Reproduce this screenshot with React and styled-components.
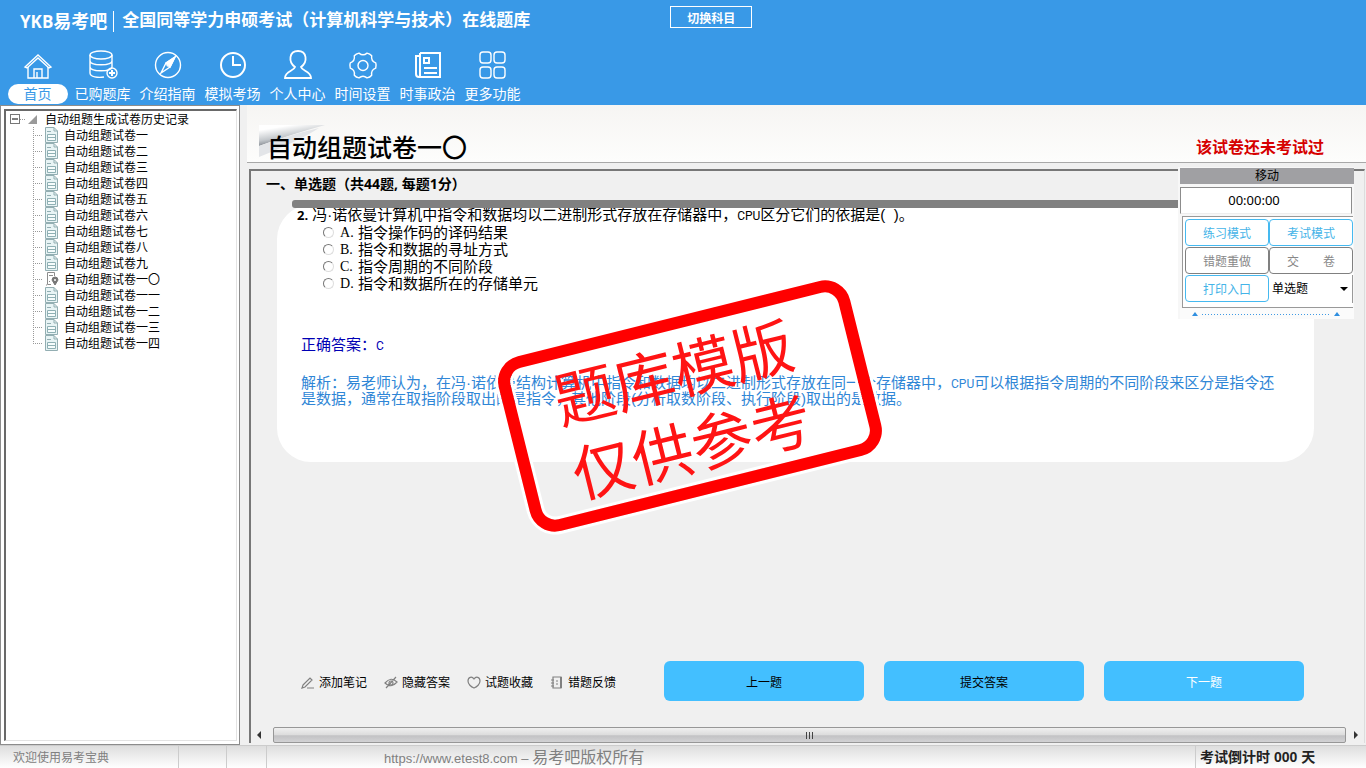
import React from 'react';
import styled, { createGlobalStyle } from 'styled-components';

const menus = [
  { name: '首页', icon: 'home' },
  { name: '已购题库', icon: 'bank' },
  { name: '介绍指南', icon: 'compass' },
  { name: '模拟考场', icon: 'clock' },
  { name: '个人中心', icon: 'user' },
  { name: '时间设置', icon: 'gear' },
  { name: '时事政治', icon: 'news' },
  { name: '更多功能', icon: 'more' },
];

const papers = ['一', '二', '三', '四', '五', '六', '七', '八', '九', '一〇', '一一', '一二', '一三', '一四'];

const options = [
  { key: 'A', text: '指令操作码的译码结果' },
  { key: 'B', text: '指令和数据的寻址方式' },
  { key: 'C', text: '指令周期的不同阶段' },
  { key: 'D', text: '指令和数据所在的存储单元' },
];

const tools = [
  { name: '添加笔记', icon: 'pen' },
  { name: '隐藏答案', icon: 'eye' },
  { name: '试题收藏', icon: 'heart' },
  { name: '错题反馈', icon: 'book' },
];

const menuIcons = {
  home: (
    <>
      <path d="M3 17 L16 5 L29 17 L27 18 L16 8 L5 18 Z" />
      <path d="M6 17 V28 H26 V17 M12 28 V19 H20 V28 M15 28 V22" />
    </>
  ),
  bank: (
    <>
      <ellipse cx="14" cy="5" rx="11" ry="4" />
      <path d="M3 5 V11 C3 16 25 16 25 11 V5 M3 11 V17 C3 22 25 22 25 17 V11 M3 17 V23 C3 27 11 28 17 27" />
      <circle cx="25" cy="23" r="5" />
      <path d="M25 20 V26 M22 23 H28" strokeWidth="2" />
    </>
  ),
  compass: (
    <>
      <circle cx="16" cy="15" r="12.500" />
      <path d="M23 7 L18 17 L9 23 L14 13 Z" />
      <path d="M23 7 L14 13 L18 17 Z" fill="#fff" />
      <circle cx="16" cy="15" r="1" fill="#3999e7" />
    </>
  ),
  clock: (
    <>
      <circle cx="16" cy="15" r="12" strokeWidth="2" />
      <path d="M16 6 V15 H24" strokeWidth="2" />
    </>
  ),
  user: (
    <path
      strokeWidth="1.800"
      d="M13 17 C6 12 7 1 16 1 C25 1 26 12 19 17 C20 21 29 21 29 28 H3 C3 21 12 21 13 17 Z"
    />
  ),
  gear: (
    <>
      <path
        strokeLinejoin="round"
        d="M28.700 12.800 Q29.600 15.500 28.700 18.200 Q23.800 20 24.700 25.200 Q23 27.300 20 27.900 Q16 24.500 12 27.900 Q9 27.300 7.300 25.200 Q8.200 20 3.300 18.200 Q2.400 15.500 3.300 12.800 Q8.200 11 7.300 5.800 Q9 3.700 12 3.100 Q16 6.500 20 3.100 Q23 3.700 24.700 5.800 Q23.800 11 28.700 12.800 Z"
      />
      <circle cx="16" cy="15.500" r="5" />
    </>
  ),
  news: (
    <>
      <path strokeWidth="2" d="M8 3 H28 V27 H7 Q4 27 4 24 V6 H8 M8 3 V27" />
      <path strokeWidth="2" d="M12 8 H17 V13 H12 Z M12 18 H25 M12 23 H25" />
    </>
  ),
  more: (
    <>
      <rect x="3" y="2" width="11" height="11" rx="3" />
      <rect x="17" y="2" width="11" height="11" rx="3" />
      <rect x="3" y="17" width="11" height="11" rx="3" />
      <rect x="17" y="17" width="11" height="11" rx="3" />
    </>
  ),
};

const toolIcons = {
  pen: <path d="M2 9 L9 2 L11 4 L4 11 L1 12 Z M6 12 H13" />,
  eye: (
    <>
      <path d="M1 7 Q7 0 13 6 Q7 13 1 7 Z M2 12 L12 1" />
      <circle cx="7" cy="7" r="2" />
    </>
  ),
  heart: <path d="M7 12 C4 11 1 8 1 5 C1 1 5 0 7 3 C9 0 13 1 13 5 C13 8 10 11 7 12 Z" />,
  book: (
    <>
      <path d="M3 1 H11 V12 H3 Z M1 4 H4 M1 7 H4 M1 10 H4 M6 5 H8 M6 8 H8" />
      <path d="M11 1 V12" strokeWidth="2" />
    </>
  ),
};

const PaperIcon = () => (
  <svg width="14" height="16" viewBox="0 0 14 16" fill="none" stroke="#93aeb2">
    <path d="M.5 .5 H9 L12.500 4 V15.500 H.5 Z" fill="#e8f4f5" />
    <path d="M9 .5 V4 H12.500 M2 4.500 H6" />
    <path d="M2.500 7.500 H10.500 V13.500 H2.500 Z M2 10.500 H11" stroke="#8fb0b4" fill="#f6fcfc" />
  </svg>
);

const CurrentIcon = () => (
  <svg width="14" height="16" viewBox="0 0 14 16" fill="none" stroke="#8c8c8c">
    <path d="M6 13.500 H2.500 V1.500 H9.500 V5 M2 14 H1 M4 4.500 H8 M4 10.500 H5" />
    <path d="M10 14 L7 9 Q7 6 10 6 Q13 6 13 9 Z" fill="#777" stroke="#777" />
    <circle cx="10" cy="9" r="1" fill="#fff" stroke="none" />
  </svg>
);

const App = () => {
  return (
    <Page>
      <GlobalStyle />
      <Header>
        <TitleRow>
          <Brand>YKB<span>易考吧</span></Brand>
          <Subject>全国同等学力申硕考试（计算机科学与技术）在线题库</Subject>
          <SwitchBox>
            <SwitchButton>切换科目</SwitchButton>
          </SwitchBox>
        </TitleRow>
        <Menu>
          {menus.map((m, i) => (
            <MenuItem href="#" key={m.name}>
              <svg width="32" height="30" viewBox="0 0 32 30" fill="none" stroke="#fff" strokeWidth="1.400">
                {menuIcons[m.icon]}
              </svg>
              <MenuLabel $active={i === 0}>{m.name}</MenuLabel>
            </MenuItem>
          ))}
        </Menu>
      </Header>

      <Body>
        <Side>
          <Tree>
            <TreeRoot>
              <svg width="36" height="16" viewBox="0 0 36 16">
                <rect x="4.500" y="3.500" width="9" height="9" fill="#fff" stroke="#777" />
                <path d="M6 8 H12" stroke="#000" />
                <path d="M14 8.500 H20" stroke="#999" strokeDasharray="1 1" />
                <path d="M22 13 L31 4 V13 Z" fill="#9a9a9a" />
              </svg>
              自动组题生成试卷历史记录
            </TreeRoot>
            <TreeList>
              {papers.map((p, i) => (
                <TreeItem key={p} $last={i === papers.length - 1}>
                  {p === '一〇' ? <CurrentIcon /> : <PaperIcon />}
                  <span>自动组题试卷{p}</span>
                </TreeItem>
              ))}
            </TreeList>
          </Tree>
        </Side>

        <Main>
          <PaperHead>
            <Curl width="68" height="36" viewBox="0 0 68 36">
              <defs>
                <linearGradient id="curl" x1="0" y1="0" x2="0.500" y2="1">
                  <stop offset="0.200" stopColor="#fff" />
                  <stop offset="0.600" stopColor="#c4c8cc" />
                  <stop offset="0.800" stopColor="#8d9299" />
                  <stop offset="1" stopColor="#f2f2f2" />
                </linearGradient>
              </defs>
              <path d="M0 0 H66 Q30 10 0 21 Z" fill="url(#curl)" />
              <path d="M0 21 Q30 10 60 3 Q40 16 0 32 Z" fill="#e3e5e8" />
            </Curl>
            <PaperName>自动组题试卷一〇</PaperName>
            <PaperState>该试卷还未考试过</PaperState>
          </PaperHead>

          <Panel>
            <Section>一、单选题（共44题, 每题1分）</Section>
            <QuestionBox>
              <Bar />
              <Question>
                <b>2.</b>
                <span>冯·诺依曼计算机中指令和数据均以二进制形式存放在存储器中，<Latin>CPU</Latin>区分它们的依据是(&nbsp; )。</span>
              </Question>
              {options.map((o) => (
                <Option key={o.key}>
                  <input type="radio" name="answer" />
                  <i>{o.key}.</i>
                  <span>{o.text}</span>
                </Option>
              ))}
              <Answer>正确答案：<Latin>C</Latin></Answer>
              <Explain>
                解析：易老师认为，在冯·诺依曼结构计算机中指令和数据均以二进制形式存放在同一个存储器中，<Latin>CPU</Latin>可以根据指令周期的不同阶段来区分是指令还是数据，通常在取指阶段取出的是指令，其他阶段(分析取数阶段、执行阶段)取出的是数据。
              </Explain>
              <Stamp>
                <div>题库模版</div>
                <div>仅供参考</div>
              </Stamp>
            </QuestionBox>

            <Actions>
              <Tools>
                {tools.map((t) => (
                  <Tool key={t.name}>
                    <svg width="14" height="14" viewBox="0 0 14 14" fill="none" stroke="#808080" strokeWidth="1.200">
                      {toolIcons[t.icon]}
                    </svg>
                    {t.name}
                  </Tool>
                ))}
              </Tools>
              <BigButton>上一题</BigButton>
              <BigButton>提交答案</BigButton>
              <BigButton $light>下一题</BigButton>
            </Actions>

            <Scroll>
              <svg width="22" height="16" viewBox="0 0 22 16"><path d="M10 4 V12 L6 8 Z" fill="#333" /></svg>
              <Thumb><i /><i /><i /></Thumb>
              <svg width="18" height="16" viewBox="0 0 18 16"><path d="M8 4 V12 L12 8 Z" fill="#333" /></svg>
            </Scroll>

            <Float>
              <FloatHead>移动</FloatHead>
              <Timer>00:00:00</Timer>
              <Modes>
                <ModeButton>练习模式</ModeButton>
                <ModeButton>考试模式</ModeButton>
                <ModeButton $gray>错题重做</ModeButton>
                <ModeButton $gray>交　　卷</ModeButton>
                <ModeButton>打印入口</ModeButton>
                <TypeBox>
                  <TypeSelect aria-label="题型">
                    <option>单选题</option>
                  </TypeSelect>
                  <svg width="8" height="4" viewBox="0 0 8 4"><path d="M0 0 H8 L4 4 Z" fill="#000" /></svg>
                </TypeBox>
              </Modes>
              <Fold>
                <svg width="6" height="4" viewBox="0 0 6 4"><path d="M0 4 L3 0 L6 4 Z" fill="#2f8fe0" /></svg>
                <hr />
                <svg width="6" height="4" viewBox="0 0 6 4"><path d="M0 4 L3 0 L6 4 Z" fill="#2f8fe0" /></svg>
              </Fold>
            </Float>
          </Panel>
        </Main>
      </Body>

      <Footer>
        <Welcome>欢迎使用易考宝典</Welcome>
        <Cell $w={48} />
        <Cell $w={40} />
        <Copyright>https://www.etest8.com – <span>易考吧版权所有</span></Copyright>
        <CountDown>考试倒计时 000 天</CountDown>
      </Footer>
    </Page>
  );
};

const GlobalStyle = createGlobalStyle`
  * {
    box-sizing: border-box;
  }
  body {
    margin: 0;
    font-family: "Liberation Sans", "Noto Sans CJK SC", sans-serif;
    font-size: 12px;
    color: #000;
  }
  button, select {
    font-family: inherit;
    font-size: 12px;
    padding: 0;
  }
  p, h1, h2 {
    margin: 0;
  }
  svg {
    flex: none;
    display: block;
  }
`

const Page = styled.div`
  display: flex;
  flex-direction: column;
  min-height: 100vh;
`

const Header = styled.header`
  height: 105px;
  background-color: #3999e7;
  color: white;
`

const TitleRow = styled.div`
  display: flex;
  align-items: center;
  height: 42px;
  padding-left: 20px;
`

const Brand = styled.div`
  font-family: "Open Sans", "Noto Sans CJK SC", sans-serif;
  font-size: 17px;
  font-weight: bold;
  line-height: 20px;
  padding-right: 6px;
  border-right: 1px solid white;
  margin-right: 8px;
  span {
    font-size: 18px;
  }
`

const Subject = styled.h1`
  font-size: 17px;
  font-weight: bold;
  line-height: 20px;
`

const SwitchBox = styled.div`
  flex: 1;
  align-self: flex-start;
  padding: 6px 0 0 140px;
`

const SwitchButton = styled.button`
  display: block;
  width: 82px;
  height: 22px;
  border: 1px solid white;
  background: none;
  color: white;
  font-weight: bold;
`

const Menu = styled.nav`
  display: flex;
  padding: 8px 0 0 5px;
`

const MenuItem = styled.a`
  display: flex;
  flex-direction: column;
  align-items: center;
  width: 65px;
  color: white;
  text-decoration: none;
`

const MenuLabel = styled.span`
  width: 60px;
  height: 20px;
  margin-top: 4px;
  border-radius: 10px;
  font-size: 14px;
  line-height: 20px;
  text-align: center;
  white-space: nowrap;
  background-color: ${(props) => (props.$active ? 'white' : 'transparent')};
  color: ${(props) => (props.$active ? '#3999e7' : 'white')};
`

const Body = styled.div`
  flex: 1;
  display: flex;
  background-color: #f0f0f0;
`

const Side = styled.aside`
  width: 240px;
  padding: 3px 2px 3px 3px;
  border: 1px solid #8c8c8c;
  background-color: white;
`

const Tree = styled.div`
  height: 100%;
  border: 1px solid #e3e3e3;
  border-left: 2px solid #696969;
  border-top: 2px solid #696969;
`

const TreeRoot = styled.div`
  display: flex;
  height: 16px;
  line-height: 18px;
  gap: 3px;
`

const TreeList = styled.ul`
  list-style: none;
  margin: 0;
  padding: 0 0 0 27px;
`

const TreeItem = styled.li`
  display: flex;
  height: 16px;
  line-height: 18px;
  background:
    repeating-linear-gradient(90deg, #999 0 1px, transparent 1px 2px) 0 8px / 10px 1px no-repeat,
    repeating-linear-gradient(#999 0 1px, transparent 1px 2px) 0 0 / 1px ${(props) => (props.$last ? '8px' : '16px')} no-repeat;
  padding-left: 12px;
  gap: 5px;
`

const Main = styled.main`
  flex: 1;
  min-width: 0;
  display: flex;
  flex-direction: column;
  margin-left: 7px;
`

const PaperHead = styled.div`
  display: flex;
  align-items: flex-end;
  justify-content: space-between;
  position: relative;
  height: 58px;
  padding: 0 42px 0 20px;
  background: linear-gradient(#f6f5f3, #fdfdfc);
  border-bottom: 1px solid #a8a8a8;
`

const Curl = styled.svg`
  position: absolute;
  left: 12px;
  top: 20px;
`

const PaperName = styled.h2`
  position: relative;
  font-size: 25px;
  font-weight: 500;
  line-height: 28px;
`

const PaperState = styled.div`
  color: #d60000;
  font-size: 16px;
  font-weight: bold;
  line-height: 28px;
`

const Panel = styled.section`
  flex: 1;
  display: flex;
  flex-direction: column;
  position: relative;
  margin: 6px 1px 2px 2px;
  border-left: 2px solid #777;
  border-top: 2px solid #777;
  border-right: 1px solid #ddd;
`

const Section = styled.div`
  height: 29px;
  padding-left: 15px;
  font-family: "Noto Sans", "Noto Sans CJK SC", sans-serif;
  font-size: 14px;
  font-weight: bold;
  line-height: 26px;
`

const QuestionBox = styled.div`
  position: relative;
  margin: 5px 50px 0 26px;
  padding: 0 35px 55px 24px;
  background-color: white;
  border-radius: 34px;
  font-size: 15px;
  line-height: 16px;
`

const Bar = styled.div`
  height: 8px;
  margin: 0 0 0 -9px;
  position: relative;
  top: -5px;
  border-radius: 3px;
  background-color: #808080;
`

const Question = styled.div`
  display: flex;
  gap: 4px;
  margin: -6px 0 1px -4px;
  height: 16px;
  b {
    font-family: "Open Sans", sans-serif;
    font-size: 13px;
  }
`

const Latin = styled.span`
  font-family: Roboto, sans-serif;
  font-size: 12px;
  line-height: 12px;
`

const Option = styled.label`
  display: flex;
  align-items: center;
  height: 17px;
  padding-left: 22px;
  input {
    appearance: none;
    width: 11px;
    height: 11px;
    margin: 0 6px 0 0;
    border: 1px solid #ddd;
    border-left-color: #777;
    border-top-color: #777;
    border-radius: 50%;
  }
  i {
    width: 18px;
    font-family: "Liberation Serif", serif;
    font-size: 14px;
    font-style: normal;
  }
`

const Answer = styled.p`
  margin-top: 45px;
  color: #0000b4;
`

const Explain = styled.p`
  margin-top: 22px;
  color: #2f86d6;
`

const Stamp = styled.div`
  position: absolute;
  left: 232px;
  top: 111px;
  width: 362px;
  height: 180px;
  padding: 6px 16px 0 0;
  border: 12px solid #ff0000;
  border-radius: 26px;
  box-shadow: 0 0 0 3px white, inset 0 0 0 3px white;
  transform: rotate(-14deg);
  color: #ff1414;
  font-size: 61px;
  line-height: 76px;
  text-align: center;
`

const Actions = styled.div`
  display: flex;
  align-items: center;
  gap: 20px;
  margin-top: auto;
  padding: 0 60px 26px 50px;
`

const Tools = styled.div`
  display: flex;
  width: 343px;
  padding-top: 4px;
`

const Tool = styled.button`
  display: flex;
  align-items: center;
  gap: 4px;
  width: 83px;
  border: none;
  background: none;
  line-height: 20px;
  color: #000;
`

const BigButton = styled.button`
  flex: 0 1 200px;
  height: 40px;
  border: none;
  border-radius: 6px;
  background-color: #43bfff;
  color: ${(props) => (props.$light ? 'white' : 'black')};
`

const Scroll = styled.div`
  display: flex;
  height: 16px;
`

const Thumb = styled.div`
  flex: 1;
  display: flex;
  align-items: center;
  justify-content: center;
  gap: 2px;
  border: 1px solid #979797;
  border-radius: 2px;
  background: linear-gradient(#f0f0f0, #dcdcdc 50%, #c2c2c4 55%, #d2d2d4);
  i {
    width: 1px;
    height: 7px;
    background-color: #444;
  }
`

const Float = styled.div`
  position: absolute;
  top: -4px;
  right: 10px;
  width: 176px;
  padding: 1px 0 0 2px;
  background-color: #f7f7f7;
`

const FloatHead = styled.div`
  height: 16px;
  background-color: #a0a0a3;
  line-height: 17px;
  text-align: center;
`

const Timer = styled.div`
  height: 27px;
  margin: 3px 2px 0 0;
  border: 1px solid #8c8c8c;
  border-bottom-color: #eee;
  background-color: white;
  padding-right: 24px;
  font-family: "Noto Sans", sans-serif;
  font-size: 13px;
  line-height: 25px;
  text-align: center;
`

const Modes = styled.div`
  display: grid;
  grid-template-columns: 1fr 1fr;
  grid-auto-rows: 28px;
  margin: 2px 1px 0 2px;
  padding: 2px 0 4px 2px;
  border: 1px solid #999;
  border-right-width: 0;
  background-color: white;
`

const ModeButton = styled.button`
  height: 27px;
  border: 1px solid;
  border-radius: 4px;
  background-color: white;
  border-color: ${(props) => (props.$gray ? '#808080' : '#45b9f0')};
  color: ${(props) => (props.$gray ? '#888' : '#45b4e8')};
`

const TypeBox = styled.div`
  display: flex;
  align-items: center;
  border-right: 1px solid #999;
  padding-right: 4px;
`

const TypeSelect = styled.select`
  appearance: none;
  flex: 1;
  height: 27px;
  padding-left: 3px;
  border: none;
  background: none;
  color: #000;
`

const Fold = styled.div`
  display: flex;
  align-items: center;
  gap: 4px;
  height: 11px;
  padding: 1px 14px 0 12px;
  background-color: #fbfbfb;
  hr {
    flex: 1;
    margin: 0;
    border: none;
    height: 1px;
    background: repeating-linear-gradient(90deg, #3f9ae4 0 1px, transparent 1px 3px);
  }
`

const Footer = styled.footer`
  display: flex;
  height: 23px;
  border-top: 1px solid #ccc;
  background: linear-gradient(#dedede, #fff);
  color: #808080;
  line-height: 24px;
`

const Welcome = styled.div`
  width: 179px;
  padding-left: 13px;
  border-right: 1px solid #ccc;
`

const Cell = styled.div`
  width: ${(props) => props.$w}px;
  border-right: 1px solid #ccc;
`

const Copyright = styled.div`
  flex: 1;
  padding-left: 117px;
  font-size: 13px;
  span {
    font-size: 16px;
  }
`

const CountDown = styled.div`
  width: 171px;
  padding-left: 4px;
  border-left: 1px solid #ccc;
  color: #222;
  font-size: 14px;
  font-weight: bold;
  line-height: 22px;
`

export default App;
